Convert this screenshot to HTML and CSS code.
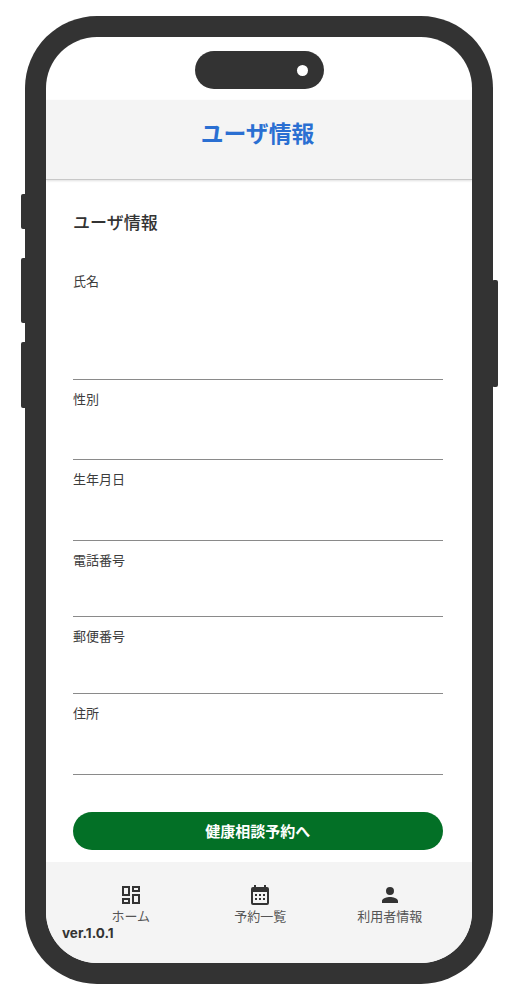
FILE: index.html
```html
<!DOCTYPE html>
<html lang="ja">
<head>
<meta charset="utf-8">
<title>ユーザ情報</title>
<link rel="stylesheet" href="styles.css">
</head>
<body>
<div class="phone">
  <span class="side side-l1"></span>
  <span class="side side-l2"></span>
  <span class="side side-l3"></span>
  <span class="side side-r"></span>
  <div class="screen">
    <div class="status"><div class="island"><span class="camera"></span></div></div>
    <header class="header"><h1>ユーザ情報</h1></header>
    <main class="content">
      <h2>ユーザ情報</h2>
      <div class="field f-name"><label>氏名</label></div>
      <div class="field f-80"><label>性別</label></div>
      <div class="field f-81"><label>生年月日</label></div>
      <div class="field f-76"><label>電話番号</label></div>
      <div class="field f-77"><label>郵便番号</label></div>
      <div class="field f-81"><label>住所</label></div>
      <button class="cta">健康相談予約へ</button>
    </main>
    <nav class="nav">
      <div class="tab">
        <svg viewBox="0 0 24 24" width="24" height="24"><path d="M3 3h8v10H3zm2 2v6h4V5zM13 3h8v6h-8zm2 2v2h4V5zM13 11h8v10h-8zm2 2v6h4v-6zM3 15h8v6H3zm2 2v2h4v-2z" fill-rule="evenodd"/></svg>
        <span>ホーム</span>
      </div>
      <div class="tab">
        <svg viewBox="0 0 24 24" width="24" height="24"><path d="M19 4h-1V2h-2v2H8V2H6v2H5a2 2 0 0 0-2 2v14a2 2 0 0 0 2 2h14a2 2 0 0 0 2-2V6a2 2 0 0 0-2-2zm0 16H5V9h14zM7 11h2v2H7zm4 0h2v2h-2zm4 0h2v2h-2zM7 15h2v2H7zm4 0h2v2h-2zm4 0h2v2h-2z" fill-rule="evenodd"/></svg>
        <span>予約一覧</span>
      </div>
      <div class="tab">
        <svg viewBox="0 0 24 24" width="24" height="24"><path d="M12 12a4 4 0 1 0 0-8 4 4 0 0 0 0 8zm0 2c-2.67 0-8 1.34-8 4v2h16v-2c0-2.66-5.33-4-8-4z"/></svg>
        <span>利用者情報</span>
      </div>
      <div class="version">ver.1.0.1</div>
    </nav>
  </div>
</div>
</body>
</html>
```
FILE: styles.css
```css
* { box-sizing: border-box; }
html, body { margin: 0; padding: 0; background: #fff; }
body {
  width: 518px;
  height: 1000px;
  overflow: hidden;
  padding: 16px 25px;
  font-family: "Noto Sans CJK JP", "Noto Sans", sans-serif;
  color: #333;
}
.phone {
  position: relative;
  width: 468px;
  height: 968px;
  background: #333;
  border-radius: 72px;
  padding: 21px;
}
.side { position: absolute; background: #333; width: 6px; border-radius: 2px; }
.side-l1 { left: -4px; top: 178px; height: 35px; }
.side-l2 { left: -4px; top: 242px; height: 65px; }
.side-l3 { left: -4px; top: 326px; height: 66px; }
.side-r { right: -5px; top: 264px; height: 107px; }
.screen {
  width: 426px;
  height: 926px;
  background: #fff;
  border-radius: 51px;
  overflow: hidden;
  display: flex;
  flex-direction: column;
}
.status { height: 63px; flex: none; padding-top: 14px; display: flex; justify-content: center; }
.island {
  width: 129px;
  height: 38px;
  background: #333;
  border-radius: 19px;
  display: flex;
  align-items: center;
  justify-content: flex-end;
  padding-right: 16px;
}
.camera { width: 11px; height: 11px; border-radius: 50%; background: #fff; }
.header {
  height: 80px;
  flex: none;
  background: #f4f4f4;
  border-bottom: 1px solid #c8c8c8;
  box-shadow: 0 1px 2px rgba(0,0,0,.12);
  display: flex;
  align-items: center;
  justify-content: center;
  padding: 0 3px 14px 0;
}
.header h1 { margin: 0; font-size: 22.8px; font-weight: 700; line-height: 30px; color: #2a6fd2; }
.content { flex: 1; padding: 0 29.5px 0 27px; min-height: 0; }
.content h2 { margin: 30px 0 0; font-size: 17px; font-weight: 500; line-height: 24px; color: #333; }
.field { border-bottom: 1px solid #8a8a8a; padding-top: 9px; }
.field label { display: block; font-size: 13px; line-height: 19px; color: #3c3c3c; }
.f-name { height: 146px; padding-top: 37px; }
.f-80 { height: 80px; }
.f-81 { height: 81px; }
.f-76 { height: 76px; }
.f-77 { height: 77px; }
.cta {
  display: block;
  width: 100%;
  height: 37.5px;
  margin-top: 37px;
  border: 0;
  border-radius: 19px;
  background: #037026;
  color: #fff;
  font-family: inherit;
  font-size: 15px;
  font-weight: 700;
  line-height: 37px;
  padding: 0;
}
.nav {
  position: relative;
  height: 101px;
  flex: none;
  background: #f4f4f4;
  display: grid;
  grid-template-columns: repeat(3, 129.5px);
  align-items: start;
  padding: 21px 0 0 20px;
}
.tab { display: flex; flex-direction: column; align-items: center; font-size: 13px; line-height: 18px; color: #555; }
.tab svg { fill: #333; display: block; }
.version {
  position: absolute;
  left: 16px;
  top: 62px;
  font-family: Inter, "Noto Sans", sans-serif;
  font-size: 13.5px;
  font-weight: 700;
  line-height: 18px;
  color: #333;
}
```
